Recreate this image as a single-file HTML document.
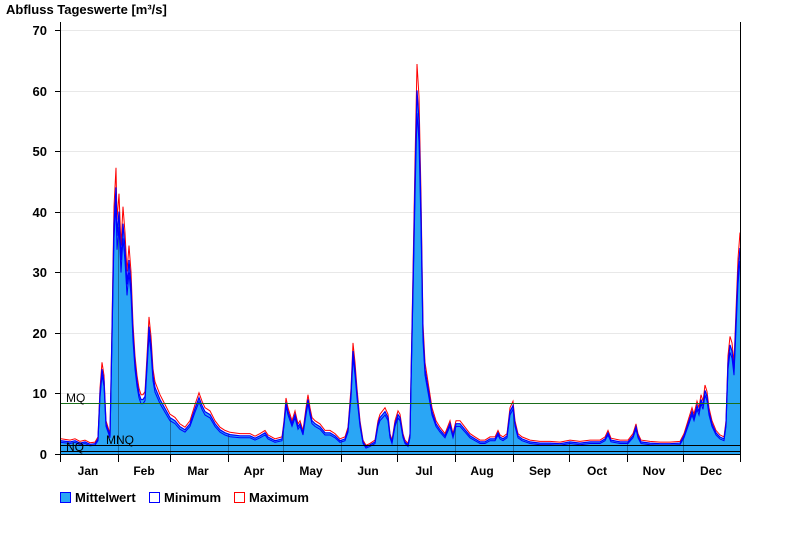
<!DOCTYPE html>
<html><head><meta charset="utf-8"><style>
body{margin:0;background:#fff;width:800px;height:550px;overflow:hidden;font-family:"Liberation Sans",Arial,sans-serif}
svg text{font-family:"Liberation Sans",Arial,sans-serif}
</style></head><body>
<svg id="s" width="800" height="550" xmlns="http://www.w3.org/2000/svg">
<text x="6" y="14" font-size="13" font-weight="bold">Abfluss Tageswerte [m³/s]</text>
<g stroke="#e8e8e8" stroke-width="1">
<line x1="61" y1="30.5" x2="740" y2="30.5"/><line x1="61" y1="91.5" x2="740" y2="91.5"/>
<line x1="61" y1="151.5" x2="740" y2="151.5"/><line x1="61" y1="212.5" x2="740" y2="212.5"/>
<line x1="61" y1="272.5" x2="740" y2="272.5"/><line x1="61" y1="333.5" x2="740" y2="333.5"/>
<line x1="61" y1="393.5" x2="740" y2="393.5"/>
</g>
<g id="data"></g>
<line x1="61" y1="403.5" x2="740" y2="403.5" stroke="#1a6e1a"/>
<line x1="61" y1="445.5" x2="740" y2="445.5" stroke="#000"/>
<line x1="61" y1="451.5" x2="740" y2="451.5" stroke="#000"/>
<text x="66" y="402" font-size="12">MQ</text>
<text x="106" y="444" font-size="12">MNQ</text>
<text x="66" y="451" font-size="12">NQ</text>
<g stroke="#000" stroke-width="1">
<line x1="60.5" y1="22" x2="60.5" y2="462"/>
<line x1="740.5" y1="22" x2="740.5" y2="454"/>
<line x1="60" y1="454.5" x2="741" y2="454.5"/>
<line x1="55" y1="30.5" x2="60" y2="30.5"/><line x1="55" y1="91.5" x2="60" y2="91.5"/>
<line x1="55" y1="151.5" x2="60" y2="151.5"/><line x1="55" y1="212.5" x2="60" y2="212.5"/>
<line x1="55" y1="272.5" x2="60" y2="272.5"/><line x1="55" y1="333.5" x2="60" y2="333.5"/>
<line x1="55" y1="393.5" x2="60" y2="393.5"/><line x1="55" y1="454.5" x2="60" y2="454.5"/>
<line x1="118.5" y1="454" x2="118.5" y2="462"/><line x1="170.5" y1="454" x2="170.5" y2="462"/>
<line x1="228.5" y1="454" x2="228.5" y2="462"/><line x1="283.5" y1="454" x2="283.5" y2="462"/>
<line x1="341.5" y1="454" x2="341.5" y2="462"/><line x1="397.5" y1="454" x2="397.5" y2="462"/>
<line x1="455.5" y1="454" x2="455.5" y2="462"/><line x1="513.5" y1="454" x2="513.5" y2="462"/>
<line x1="569.5" y1="454" x2="569.5" y2="462"/><line x1="627.5" y1="454" x2="627.5" y2="462"/>
<line x1="683.5" y1="454" x2="683.5" y2="462"/><line x1="740.5" y1="454" x2="740.5" y2="462"/>
</g>
<g font-size="13" font-weight="bold" text-anchor="end">
<text x="47" y="35">70</text><text x="47" y="96">60</text><text x="47" y="156">50</text>
<text x="47" y="217">40</text><text x="47" y="277">30</text><text x="47" y="338">20</text>
<text x="47" y="398">10</text><text x="47" y="459">0</text>
</g>
<g font-size="12" font-weight="bold" text-anchor="middle">
<text x="88" y="475">Jan</text><text x="144" y="475">Feb</text><text x="198" y="475">Mar</text>
<text x="254" y="475">Apr</text><text x="311" y="475">May</text><text x="368" y="475">Jun</text>
<text x="424" y="475">Jul</text><text x="482" y="475">Aug</text><text x="540" y="475">Sep</text>
<text x="597" y="475">Oct</text><text x="654" y="475">Nov</text><text x="711" y="475">Dec</text>
</g>
<rect x="60.5" y="492.5" width="10" height="10" fill="#2aa6f5" stroke="#0000ff"/>
<text x="75" y="502" font-size="13" font-weight="bold">Mittelwert</text>
<rect x="149.5" y="492.5" width="10" height="10" fill="#fff" stroke="#0000ff"/>
<text x="164" y="502" font-size="13" font-weight="bold">Minimum</text>
<rect x="234.5" y="492.5" width="10" height="10" fill="#fff" stroke="#ff0000"/>
<text x="249" y="502" font-size="13" font-weight="bold">Maximum</text>
</svg>
<script>
var d=[61,2.2,70,2,75,2.2,80,1.8,85,2,90,1.6,95,1.7,98,2.5,100,10,102,14,104,12,106,5,108,4,110,3,112,20,114,38,116,44,117,36,119,40,121,32,123,38,125,34,127,28,129,32,131,28,133,20,135,15,137,12,139,10,141,9,143,9,145,9.5,147,15,149,21,151,18,153,13,155,11,160,9,165,7.5,170,6,175,5.5,180,4.5,185,4,190,5,195,7.5,199,9.3,202,8,205,7,210,6.5,215,5,220,4,225,3.5,230,3.2,240,3,250,3,255,2.6,260,3,265,3.5,268,2.8,275,2.2,282,2.5,284,5,286,8.5,288,7,290,6,292,5,295,6.5,298,4.5,300,5,303,3.5,306,7,308,9,310,7,312,5.5,315,5,320,4.5,325,3.5,330,3.5,335,3,340,2.2,345,2.5,348,4,351,10,353,17,355,14,357,10,360,5,363,2,366,1.2,370,1.5,375,2,378,5,380,6,385,7,388,6,390,3,392,2,395,5,398,6.5,400,6,403,3,405,2,408,1.5,410,3,411,12,413,28,415,45,417,60,419,55,421,40,423,20,425,14,428,11,432,7,436,5,440,4,445,3,450,5,453,3,456,5,460,5,465,4,470,3,475,2.5,480,2,485,2,490,2.5,495,2.5,498,3.5,500,2.8,503,2.5,507,3,510,7,513,8,515,5,518,3,522,2.5,530,2,540,1.8,550,1.8,560,1.7,570,2,580,1.8,590,2,600,2,605,2.5,608,3.5,611,2.3,620,2,628,2,633,3,636,4.5,638,3,641,2,650,1.8,660,1.7,670,1.7,680,1.8,684,3,688,5,690,6,692,7,694,6,697,8,699,7,701,9,703,8,705,10.5,707,9.5,709,7,712,5,716,3.5,720,2.8,724,2.5,726,5,728,15,730,18,732,17,734,14,736,22,738,30,740,34];
function y(v){return (454-6.06*v).toFixed(1);}
var m=[],lo=[],hi=[];
for(var i=0;i<d.length;i+=2){var x=d[i],v=d[i+1];m.push(x+","+y(v));lo.push(x+","+y(Math.max(0.5,v*0.94-0.15)));hi.push(x+","+y(v*1.07+0.15));}
var poly='61,454 '+m.join(" ")+' 740,454';
var mx=[118,170,228,283,341,397,455,513,569,627,683],vl='';
for(var j=0;j<mx.length;j++)vl+='<line x1="'+(mx[j]+.5)+'" y1="30" x2="'+(mx[j]+.5)+'" y2="454"/>';
var g=document.getElementById("data");
g.innerHTML='<defs><clipPath id="c"><polygon points="'+poly+'"/></clipPath></defs>'+
'<polygon points="'+poly+'" fill="#2aa6f5"/>'+
'<g clip-path="url(#c)" stroke="#000" stroke-opacity="0.35">'+vl+'</g>'+
'<polyline points="'+hi.join(" ")+'" fill="none" stroke="#ff0000" stroke-width="1"/>'+
'<polyline points="'+lo.join(" ")+'" fill="none" stroke="#0000ff" stroke-width="1"/>'+
'<polyline points="'+m.join(" ")+'" fill="none" stroke="#0000ff" stroke-width="1.2"/>';
</script>
</body></html>
